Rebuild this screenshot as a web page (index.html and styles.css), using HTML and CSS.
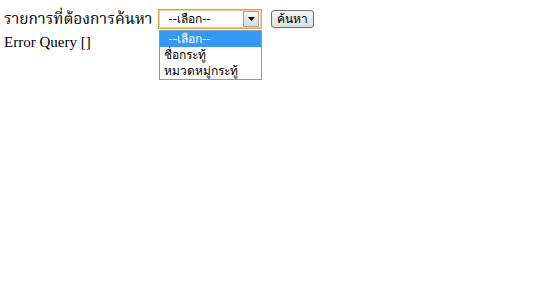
FILE: index.html
```html
<!DOCTYPE html>
<html lang="th">
<head>
<meta charset="utf-8">
<title>ค้นหา</title>
<link rel="stylesheet" href="styles.css">
</head>
<body>
<div class="search-row">
  <span class="label">รายการที่ต้องการค้นหา</span>
  <div class="select-wrap">
    <div class="select">
      <span class="select-text">--เลือก--</span>
      <span class="select-arrow"><svg width="7" height="4" viewBox="0 0 7 4"><path d="M0 0H7L3.5 4Z" fill="#000"/></svg></span>
    </div>
    <div class="options">
      <div class="option selected first">--เลือก--</div>
      <div class="option">ชื่อกระทู้</div>
      <div class="option">หมวดหมู่กระทู้</div>
    </div>
  </div>
  <span class="button">ค้นหา</span>
</div>
<div class="error">Error Query []</div>
</body>
</html>
```

FILE: styles.css
```css
html {
  margin: 0;
  padding: 0;
  height: 100%;
  background: #ffffff;
}
body {
  box-sizing: border-box;
  margin: 0;
  min-height: 100%;
  padding: 8px 4px 0 4px;
  font-family: "Liberation Serif", "Norasi", "Noto Serif Thai", serif;
  font-size: 15px;
  color: #000;
  background: #ffffff;
}
.search-row {
  display: flex;
  align-items: center;
  height: 22px;
  margin: 0 0 3px 0;
}
.label {
  font-size: 15.5px;
  line-height: 18px;
  margin-right: 6px;
  white-space: nowrap;
}
.select-wrap {
  position: relative;
  z-index: 5;
  width: 104px;
  height: 20px;
}
.select {
  box-sizing: border-box;
  width: 104px;
  height: 20px;
  border: 1px solid #d8a640;
  box-shadow: inset 0 0 0 1px #f0d498;
  display: flex;
  align-items: center;
  justify-content: space-between;
  padding: 0 2px 0 9px;
  font-family: "DejaVu Sans", "Noto Sans", sans-serif;
  font-size: 12px;
  background: #fff;
}
.select-text {
  line-height: 16px;
}
.select-arrow {
  box-sizing: border-box;
  width: 16px;
  height: 16px;
  border: 1px solid #a0a0a0;
  background: linear-gradient(#f6f6f6, #dcdcdc);
  display: flex;
  align-items: center;
  justify-content: center;
}
.options {
  position: absolute;
  top: 21px;
  left: 1px;
  box-sizing: border-box;
  width: 103px;
  height: 50px;
  border: 1px solid #7f9db9;
  background: #fff;
  font-family: "DejaVu Sans", "Noto Sans", sans-serif;
  font-size: 12px;
}
.option {
  height: 16px;
  line-height: 16px;
  padding: 0 4px;
  white-space: nowrap;
}
.option.first {
  padding-left: 8px;
}
.option.selected {
  background: #3399ff;
  color: #fff;
}
.button {
  box-sizing: border-box;
  margin-left: 9px;
  width: 43px;
  height: 18px;
  border: 1px solid #707070;
  border-radius: 3px;
  background: linear-gradient(#f4f4f4, #dedede);
  font-family: "DejaVu Sans", "Noto Sans", sans-serif;
  font-size: 12px;
  line-height: 16px;
  text-align: center;
}
.error {
  line-height: 18px;
}
```
